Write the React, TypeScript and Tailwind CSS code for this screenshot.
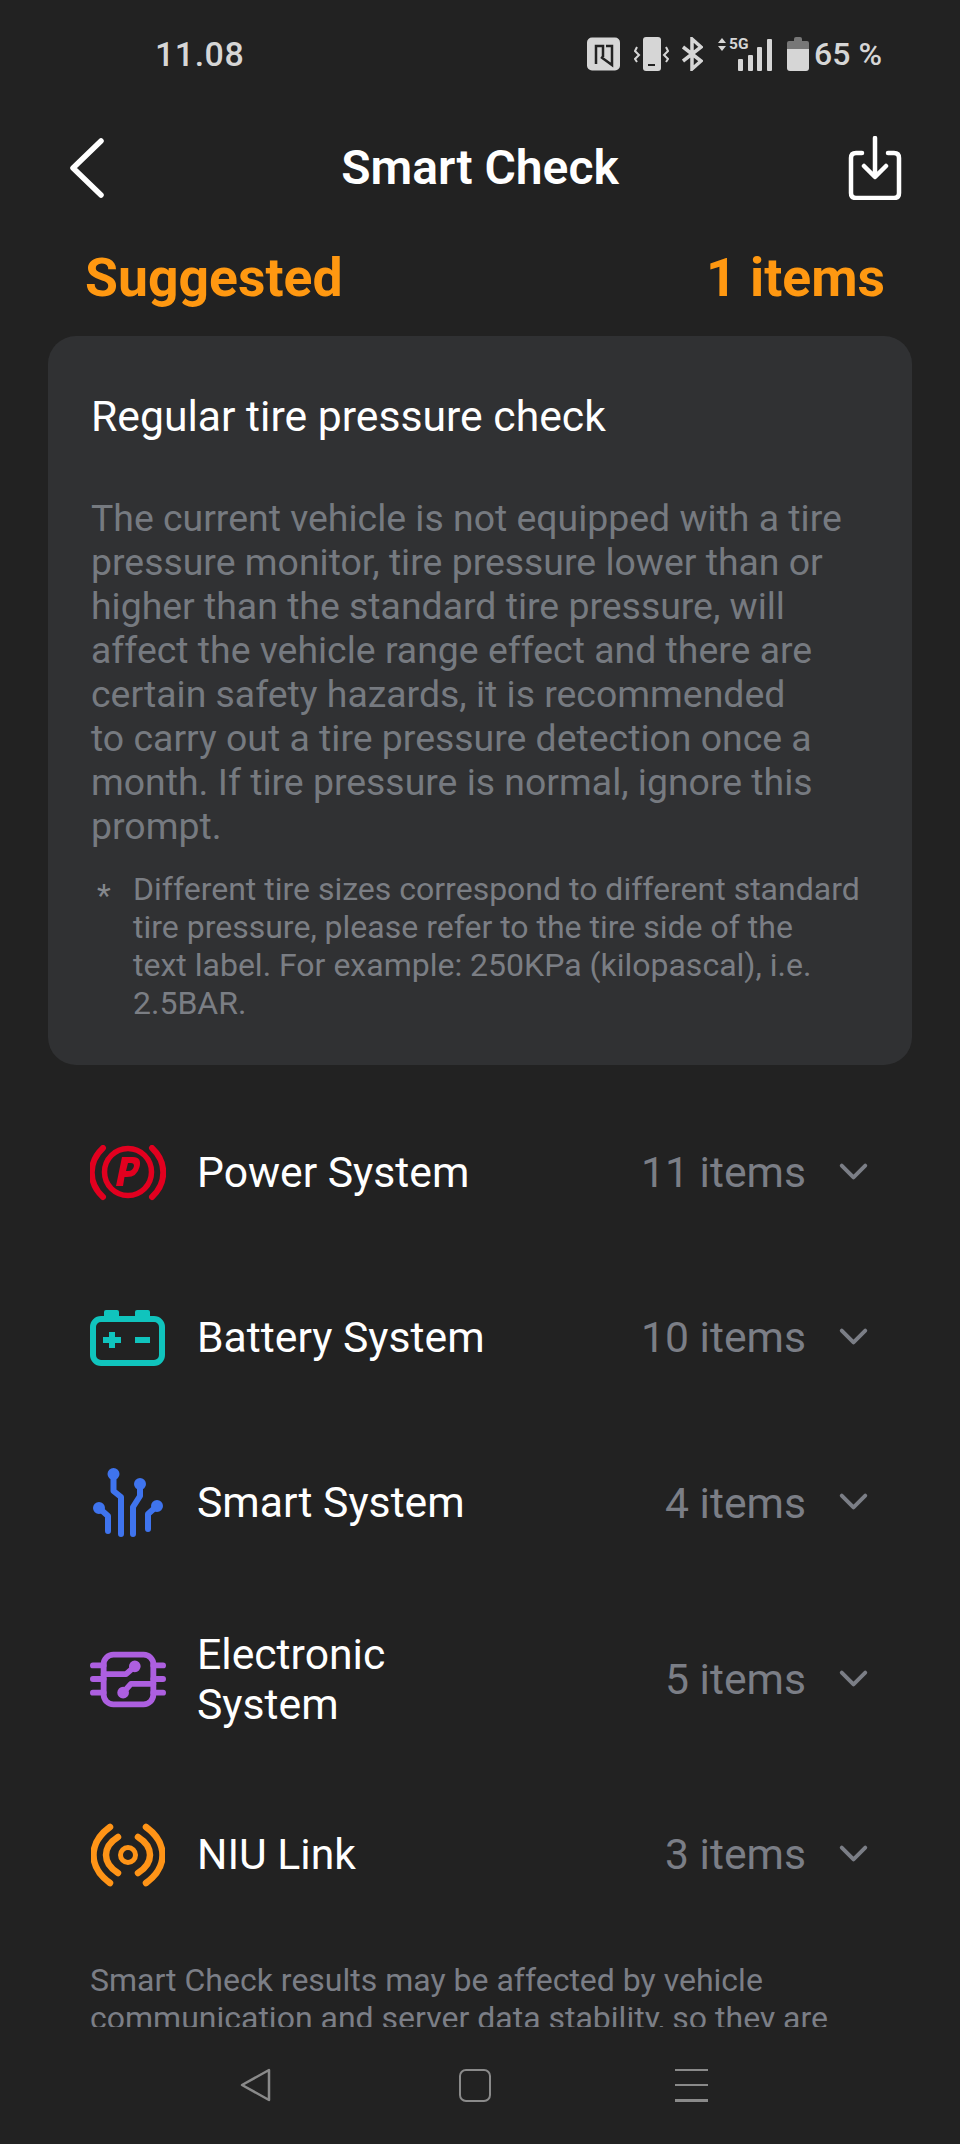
import { ChevronDown } from "lucide-react"

function BrakeIcon() {
  return (
    <svg width="76" height="56" viewBox="0 0 76 56" fill="none">
      <path d="M13 3 C-2 17 -2 38 13 52" stroke="#e2001f" strokeWidth="6" strokeLinecap="round" />
      <path d="M62 3 C77 17 77 38 62 52" stroke="#e2001f" strokeWidth="6" strokeLinecap="round" />
      <circle cx="38" cy="27" r="23.5" stroke="#e2001f" strokeWidth="5.5" />
      <path
        fillRule="evenodd"
        fill="#e2001f"
        d="M26 41 L32 12 H43 Q52 12 49.5 22 Q47 32 37 32 H34.5 L33 41 Z M38 18 L36 26 H38 Q43 26 44 21 Q44 18 41 18 Z"
      />
    </svg>
  )
}

function BatteryIcon() {
  return (
    <svg width="76" height="56" viewBox="0 0 76 56" fill="none">
      <rect x="14" y="0" width="15" height="12" rx="2" fill="#10c4bd" />
      <rect x="45" y="0" width="15" height="12" rx="2" fill="#10c4bd" />
      <rect x="3" y="9" width="69" height="44" rx="8" stroke="#10c4bd" strokeWidth="6" fill="#222222" />
      <path d="M13 30 H31 M22 22 V38 M45 30 H60" stroke="#10c4bd" strokeWidth="6" />
    </svg>
  )
}

function SmartIcon() {
  return (
    <svg width="70" height="70" viewBox="0 0 70 70" fill="none" stroke="#3f74ee" strokeWidth="6" strokeLinecap="round" strokeLinejoin="round">
      <circle cx="20.5" cy="6" r="3" fill="#3f74ee" />
      <circle cx="47" cy="16" r="3" fill="#3f74ee" />
      <circle cx="6" cy="40" r="3" fill="#3f74ee" />
      <circle cx="64" cy="38" r="3" fill="#3f74ee" />
      <path d="M20.5 6 V23 L28 29 V66" />
      <path d="M47 16 V28 L40 39 V66" />
      <path d="M6 40 L15 48 V63" />
      <path d="M64 38 L55 46 V61" />
    </svg>
  )
}

function ElectronicIcon() {
  return (
    <svg width="78" height="58" viewBox="0 0 78 58" fill="none" stroke="#ad5fe0" strokeWidth="6" strokeLinecap="round" strokeLinejoin="round">
      <rect x="14" y="3" width="51" height="51" rx="10" />
      <path d="M3 14 H14 M3 28 H14 M3 42 H14 M65 14 H75 M65 28 H75 M65 42 H75" />
      <path d="M14 23 H37 L46 15" />
      <circle cx="46" cy="15" r="3" fill="#ad5fe0" />
      <path d="M65 33 H42 L34 42" />
      <circle cx="34" cy="42" r="3" fill="#ad5fe0" />
    </svg>
  )
}

function LinkIcon() {
  return (
    <svg width="74" height="64" viewBox="0 0 74 64" fill="none" stroke="#ff9417" strokeWidth="6.5" strokeLinecap="round">
      <path d="M19 4 C-3 20 -3 44 19 60" />
      <path d="M55 4 C77 20 77 44 55 60" />
      <path d="M27 14 C11 24 11 40 27 50" />
      <path d="M47 14 C63 24 63 40 47 50" />
      <circle cx="37" cy="32" r="7.5" strokeWidth="5" />
    </svg>
  )
}

const rows = [
  { icon: <BrakeIcon />, name: "Power System", count: "11 items", h: "h-[165px]" },
  { icon: <BatteryIcon />, name: "Battery System", count: "10 items", h: "h-[165px]" },
  { icon: <SmartIcon />, name: "Smart System", count: "4 items", h: "h-[166px]" },
  { icon: <ElectronicIcon />, name: "Electronic System", count: "5 items", h: "h-[187px]" },
  { icon: <LinkIcon />, name: "NIU Link", count: "3 items", h: "h-[163px]" },
]

export default function App() {
  return (
    <div className="relative w-[960px] h-[2144px] overflow-hidden bg-[#222222] font-['Roboto',sans-serif]">
      {/* status bar */}
      <div className="flex items-center h-[54px] mt-[27px] pl-[155px] pr-[78px] justify-between text-[#d6d6d6]">
        <span className="text-[34px] font-medium tracking-[0.5px]">11.08</span>
        <div className="flex items-center">
          <svg width="33" height="34" viewBox="0 0 33 34">
            <rect x="0" y="0.5" width="33" height="33" rx="5" fill="#d6d6d6" />
            <path d="M9 27 V9 H16 V20 M14 20 L25 28 V9 H19" fill="none" stroke="#222222" strokeWidth="2.5" />
          </svg>
          <svg className="ml-[14px]" width="35" height="34" viewBox="0 0 35 34" fill="none">
            <rect x="9" y="0" width="18" height="34" rx="3" fill="#d6d6d6" />
            <path d="M14 28 H21" stroke="#222222" strokeWidth="2" />
            <path d="M3 10 L1 14 L5 18 L1 22 L3 25 M32 10 L34 14 L30 18 L34 22 L32 25" stroke="#d6d6d6" strokeWidth="2" />
          </svg>
          <svg className="ml-[13px]" width="21" height="34" viewBox="0 0 21 34" fill="none">
            <path d="M1 10 L19 24 L10 32 V2 L19 10 L1 24" stroke="#d6d6d6" strokeWidth="3.5" />
          </svg>
          <div className="relative ml-[15px] w-[54px] h-[34px]">
            <svg className="absolute left-0 top-0" width="54" height="34" viewBox="0 0 54 34" fill="#d6d6d6">
              <path d="M0 6 L4 1 L8 6 Z M0 9 L4 14 L8 9 Z" />
              <rect x="20" y="22" width="5" height="12" rx="1" />
              <rect x="30" y="18" width="5" height="16" rx="1" />
              <rect x="39" y="10" width="5" height="24" rx="1" />
              <rect x="49" y="2" width="5" height="32" rx="1" />
            </svg>
            <span className="absolute left-[11px] -top-[1px] text-[15.5px] font-bold leading-[16px]">5G</span>
          </div>
          <svg className="ml-[15px]" width="22" height="36" viewBox="0 0 22 36">
            <path d="M2 5 H7 V3 Q7 1 9 1 H13 Q15 1 15 3 V5 H20 Q22 5 22 7 V13 H0 V7 Q0 5 2 5 Z" fill="#777" />
            <path d="M0 13 H22 V32 Q22 35 19 35 H3 Q0 35 0 32 Z" fill="#d6d6d6" />
          </svg>
          <span className="ml-[5px] text-[32px] font-medium">65 %</span>
        </div>
      </div>

      {/* header */}
      <div className="flex items-center justify-between h-[64px] mt-[55px] pl-[69px] pr-[58px]">
        <svg width="36" height="60" viewBox="0 0 36 60" fill="none">
          <path d="M32 3 L4 30 L32 57" stroke="#fff" strokeWidth="5.5" strokeLinecap="round" strokeLinejoin="round" />
        </svg>
        <h1 className="ml-[7px] text-[48px] font-semibold text-white">Smart Check</h1>
        <svg width="54" height="64" viewBox="0 0 54 64" fill="none" stroke="#fff" strokeWidth="4.5" strokeLinecap="round" strokeLinejoin="round">
          <path d="M14 17 H8 Q3 17 3 22 V57 Q3 62 8 62 H46 Q51 62 51 57 V22 Q51 17 46 17 H40" />
          <path d="M27 2 V40 M16 30 L27 41 L38 30" />
        </svg>
      </div>

      {/* suggested */}
      <div className="flex items-center justify-between mt-[48px] pl-[85px] pr-[75px] text-[#ff9811] text-[53.5px] font-bold leading-[60px]">
        <span>Suggested</span>
        <span>1 items</span>
      </div>

      {/* card */}
      <div className="mx-[48px] mt-[28px] h-[729px] rounded-[28px] bg-[#303133] pl-[43px] pr-[40px] pt-[55px]">
        <p className="text-[42.7px] leading-[50px] text-white">Regular tire pressure check</p>
        <p className="mt-[55px] text-[37.4px] leading-[44px] text-[#767a80] whitespace-pre-line">
          {"The current vehicle is not equipped with a tire\npressure monitor, tire pressure lower than or\nhigher than the standard tire pressure, will\naffect the vehicle range effect and there are\ncertain safety hazards, it is recommended\nto carry out a tire pressure detection once a\nmonth. If tire pressure is normal, ignore this\nprompt."}
        </p>
        <div className="flex mt-[22px]">
          <span className="w-[42px] shrink-0 text-[32px] leading-[38px] pl-[6px] pt-[6px] text-[#85888d]">*</span>
          <p className="text-[32px] leading-[38px] text-[#7b7e84] whitespace-pre-line">
            {"Different tire sizes correspond to different standard\ntire pressure, please refer to the tire side of the\ntext label. For example: 250KPa (kilopascal), i.e.\n2.5BAR."}
          </p>
        </div>
      </div>

      {/* system rows */}
      <div className="mt-[25px] pl-[90px] pr-[83px]">
        {rows.map((row) => (
          <div key={row.name} className={`flex items-center ${row.h}`}>
            <div className="w-[76px] shrink-0 flex justify-center">{row.icon}</div>
            <span className="ml-[31px] w-[300px] -mt-[2px] text-[42.7px] leading-[50px] text-white">{row.name}</span>
            <span className="ml-auto text-[42.7px] text-[#7b7e86]">{row.count}</span>
            <ChevronDown className="ml-[24px] -mt-[3px]" size={47} color="#7b7e86" strokeWidth={2} />
          </div>
        ))}
      </div>

      {/* disclaimer, cut off by the nav bar */}
      <div className="mt-[25px] h-[66px] overflow-hidden px-[90px]">
        <p className="text-[32px] leading-[38px] text-[#7b7e86]">
          Smart Check results may be affected by vehicle communication and server data stability, so they are for reference only.
        </p>
      </div>

      {/* nav bar */}
      <div className="flex items-center mt-[41px] pl-[240px]">
        <svg width="32" height="34" viewBox="0 0 32 34" fill="none">
          <path d="M29 2 V32 L2 17 Z" stroke="#8a8a8a" strokeWidth="2.5" strokeLinejoin="round" />
        </svg>
        <div className="ml-[187px] w-[32px] h-[33px] rounded-[7px] border-[2.5px] border-[#8a8a8a]" />
        <div className="ml-[184px] w-[33px] h-[33px] flex flex-col justify-between">
          <div className="h-[2.5px] bg-[#8a8a8a]" />
          <div className="h-[2.5px] bg-[#8a8a8a]" />
          <div className="h-[2.5px] bg-[#8a8a8a]" />
        </div>
      </div>
    </div>
  )
}
